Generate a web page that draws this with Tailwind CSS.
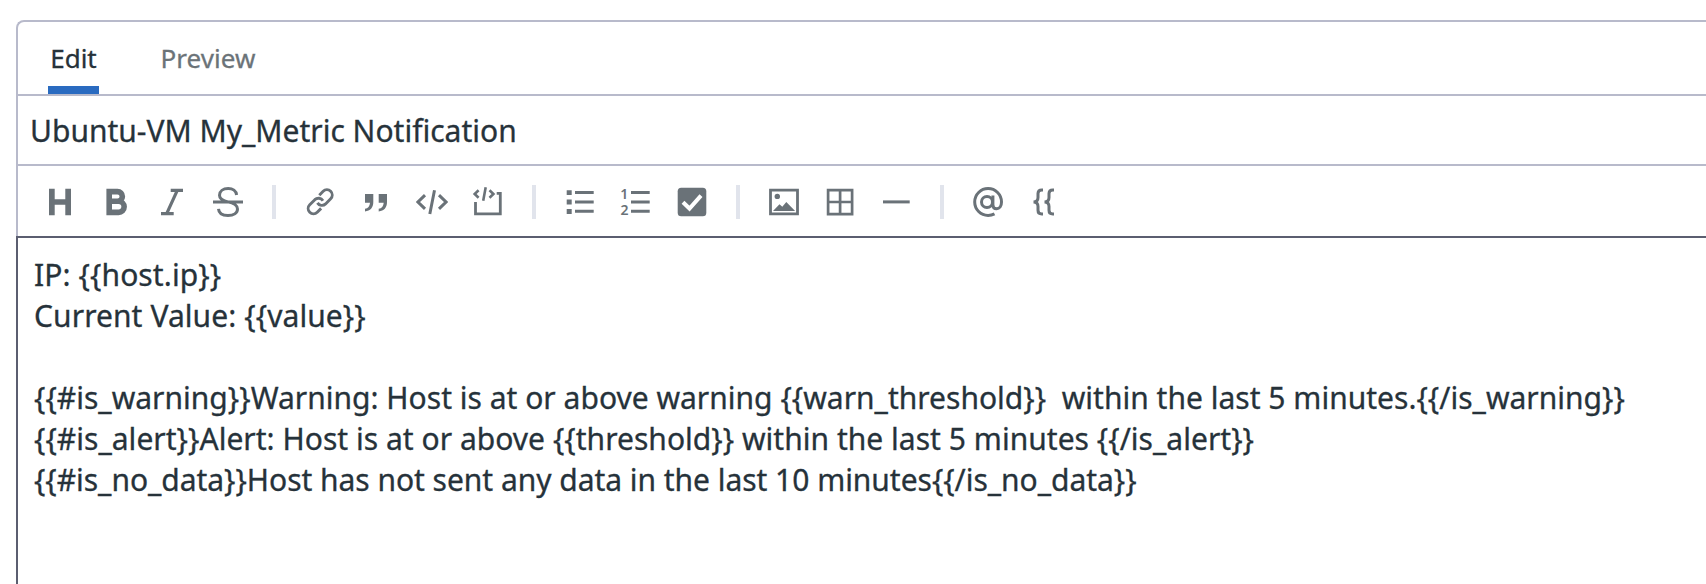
<!DOCTYPE html>
<html lang="en">
<head>
<meta charset="utf-8">
<title>Notification editor</title>
<script src="https://cdn.jsdelivr.net/npm/@tailwindcss/browser@4"></script>
</head>
<body class="bg-white h-screen overflow-hidden font-['Noto_Sans',sans-serif] text-[#26323a] [-webkit-text-stroke:0.3px_currentColor]">
<div class="pt-5 pl-4 h-full">
  <div class="h-full flex flex-col">
    <div class="h-[76px] shrink-0 border-t-2 border-l-2 border-b-2 border-[#b8bacb] rounded-tl-[8px] flex items-stretch pl-[30px] text-[26px] leading-[36px]">
      <div class="w-[51px] flex flex-col items-center justify-between pt-[18px]">
        <span class="whitespace-nowrap">Edit</span>
        <span class="h-2 w-full bg-[#2a6bc0]"></span>
      </div>
      <div class="ml-[61.5px] pt-[18px] text-[#6b7378] tracking-[0.06px]">Preview</div>
    </div>
    <div class="h-[70px] shrink-0 border-l-2 border-b-2 border-[#b8bacb] pl-[12px] pt-[14px] text-[30px] leading-[41px] whitespace-nowrap">Ubuntu-VM My_Metric Notification</div>
    <div class="h-[70px] shrink-0 border-l-2 border-[#b8bacb] flex items-center pl-[26px] pt-[2px] text-[#6a7278]">
      <div class="flex gap-6">
        <svg class="size-8" viewBox="0 0 32 32" fill="currentColor"><path d="M5 2.8h5.7v10.5h10.6V2.8H27v26.4h-5.7V18.7H10.7v10.5H5z"/></svg>
        <svg class="size-8" viewBox="0 0 32 32" fill="none" stroke="currentColor" stroke-width="5.6"><path d="M9.2 5.6h8.3a4.3 4.3 0 0 1 0 9.7H9.2h9.4a5.5 5.5 0 0 1 0 11.1H9.2zV26.4"/></svg>
        <svg class="size-8" viewBox="0 0 32 32" fill="none" stroke="currentColor" stroke-width="3.2"><path d="M14.7 4.4H27M5 27.7h12.7M21.3 4.4L10.7 27.7"/></svg>
        <svg class="size-8" viewBox="0 0 32 32" fill="none" stroke="currentColor" stroke-width="3"><path d="M1 15.9h30M24.6 9C24.2 5 20.800 2.500 16.200 2.500 11 2.500 7.500 5.200 7.500 9.200c0 4.300 3.700 5.600 8.500 6.700 5.800 1.300 9.500 3 9.500 7 0 4-4 6.600-9.500 6.600-5.600 0-9.200-2.300-9.500-6.600"/></svg>
      </div>
      <span class="w-1 h-[34px] bg-[#e1e4ec] mx-7"></span>
      <div class="flex gap-6">
        <svg class="size-8" viewBox="0 0 32 32" fill="none" stroke="currentColor" stroke-width="2.9"><g transform="translate(16.200 15.800) rotate(-45)"><path d="M4 -5.300H9.500a5.300 5.300 0 0 1 0 10.600H2.300A5.300 5.300 0 0 1 -2.700 -1.200M-4 5.300H-9.500a5.300 5.300 0 0 1 0 -10.600H-2.300A5.300 5.300 0 0 1 2.700 1.200"/></g></svg>
        <svg class="size-8" viewBox="0 0 32 32" fill="currentColor"><path d="M5 8h8.300v8c0 5.600-3 9-8.300 9.400v-2.600c3-.5 4.800-2.700 5-6.100H5zM18.700 8H27v8c0 5.600-3 9-8.300 9.400v-2.600c3-.5 4.800-2.700 5-6.100h-5z"/></svg>
        <svg class="size-8" viewBox="0 0 32 32" fill="none" stroke="currentColor" stroke-width="3"><path d="M9 9.200L2 16l7 6.800M23 9.200L30 16l-7 6.800M18.500 4.200L13.800 28"/></svg>
        <svg class="size-8" viewBox="0 0 32 32" fill="none" stroke="currentColor" stroke-width="2.800"><path d="M3.500 16v11.900h24.800V7.400h-3.600"/><path stroke-width="2.600" d="M6.600 4.300L2.700 8l3.900 3.700M17.500 4.300L21.400 8l-3.900 3.700M13.700 1.300L11.200 14.700"/></svg>
      </div>
      <span class="w-1 h-[34px] bg-[#e1e4ec] mx-7"></span>
      <div class="flex gap-6">
        <svg class="size-8" viewBox="0 0 32 32" fill="currentColor"><path d="M2.700 4.200h5v4.900h-5zM2.700 13.600h5v4.900h-5zM2.700 23h5v4.900h-5zM11 5h18.700v3H11zM11 14.400h18.700v3H11zM11 23.800h18.700v3H11z"/></svg>
        <svg class="size-8 overflow-visible" viewBox="0 0 32 32" fill="currentColor"><path d="M11 5h18.700v3H11zM11 14.400h18.700v3H11zM11 23.800h18.700v3H11z"/><text x="0.200" y="13" font-size="14" font-weight="600">1</text><text x="0.500" y="29" font-size="14" font-weight="600">2</text></svg>
        <svg class="size-8" viewBox="0 0 32 32"><rect x="1.700" y="1.700" width="28.600" height="28.600" rx="3.500" fill="currentColor"/><path d="M7 16.200l6.500 6.300L25 9.700" fill="none" stroke="#fff" stroke-width="4"/></svg>
      </div>
      <span class="w-1 h-[34px] bg-[#e1e4ec] mx-7"></span>
      <div class="flex gap-6">
        <svg class="size-8" viewBox="0 0 32 32" fill="currentColor"><path fill="none" stroke="currentColor" stroke-width="2.800" d="M2.500 4.100h27v23.800h-27z"/><circle cx="9.300" cy="10.400" r="2.700"/><path d="M5 25l6.500-6.800 2.800 2.600L18.300 16l8.800 9z"/></svg>
        <svg class="size-8" viewBox="0 0 32 32" fill="none" stroke="currentColor" stroke-width="2.700"><path d="M4.100 4.100h24v24h-24zM16.100 4.100v24M4.100 16h24"/></svg>
        <svg class="size-8" viewBox="0 0 32 32" fill="none" stroke="currentColor" stroke-width="3"><path d="M3 15.900h26.700"/></svg>
      </div>
      <span class="w-1 h-[34px] bg-[#e1e4ec] mx-7"></span>
      <div class="flex gap-6">
        <svg class="size-8" viewBox="0 0 32 32" fill="none" stroke="currentColor" stroke-width="3"><circle cx="15" cy="16" r="5.500"/><path d="M20.900 9.500v9.300c0 2.400 1.400 4 3.700 4 2.900 0 4.900-2.600 4.900-6.800A13.400 13.400 0 1 0 16.100 29.400c2.400 0 4.300-.5 6.400-1.600"/></svg>
        <svg class="size-8" viewBox="0 0 32 32" fill="none" stroke="currentColor" stroke-width="3"><path d="M15 3.900h-1.200c-2.400 0-3.800 1.200-3.800 3.700v3.800c0 2.800-1.300 4.500-4.500 4.500 3.200 0 4.500 1.700 4.500 4.500v3.800c0 2.500 1.400 3.700 3.800 3.700H15M26 3.900h-1.200c-2.400 0-3.800 1.200-3.800 3.700v3.800c0 2.800-1.300 4.500-4.500 4.500 3.200 0 4.500 1.700 4.500 4.500v3.800c0 2.500 1.400 3.700 3.800 3.700H26"/></svg>
      </div>
    </div>
    <div class="grow border-t-2 border-l-2 border-[#5b5e70] pl-4 pt-[16px] text-[30px] leading-[41px] whitespace-pre"><div class="tracking-[0.09px]">IP: {{host.ip}}</div><div class="tracking-[0.08px]">Current Value: {{value}}</div><div class="h-[41px]"></div><div class="tracking-[0.01px]">{{#is_warning}}Warning: Host is at or above warning {{warn_threshold}}  within the last 5 minutes.{{/is_warning}}</div><div class="tracking-[0.025px]">{{#is_alert}}Alert: Host is at or above {{threshold}} within the last 5 minutes {{/is_alert}}</div><div class="tracking-[-0.035px]">{{#is_no_data}}Host has not sent any data in the last 10 minutes{{/is_no_data}}</div></div>
  </div>
</div>
</body>
</html>
